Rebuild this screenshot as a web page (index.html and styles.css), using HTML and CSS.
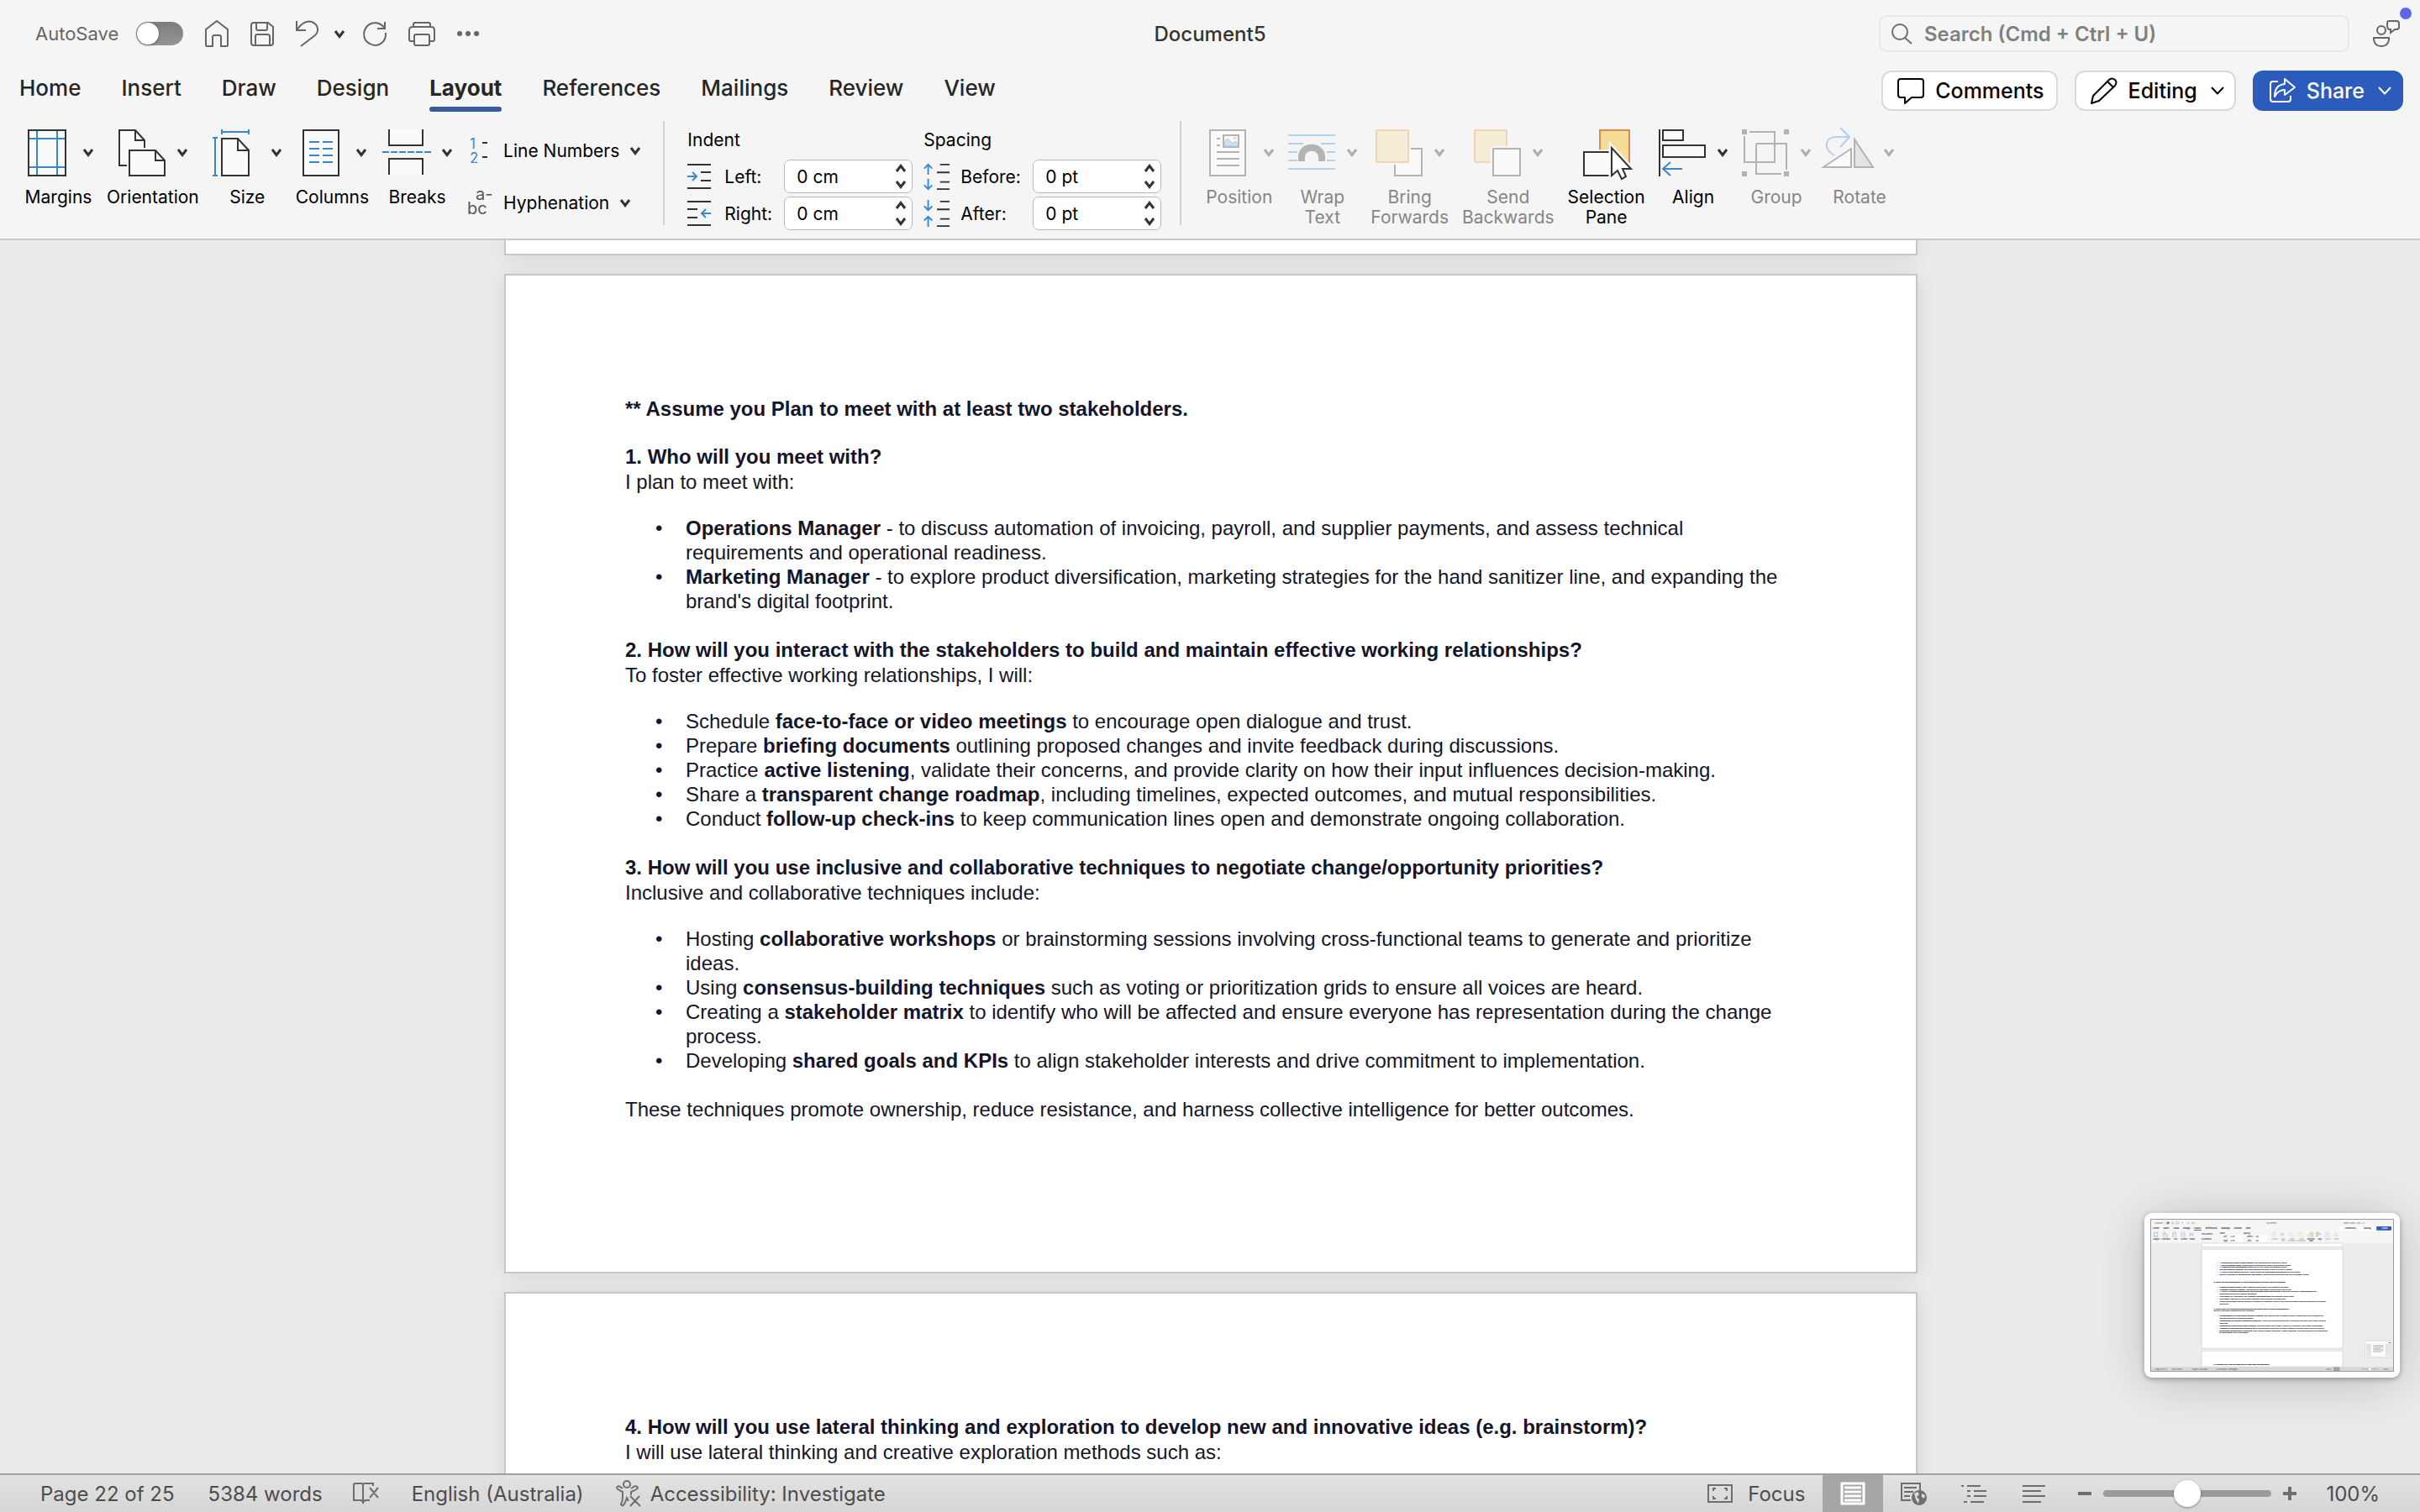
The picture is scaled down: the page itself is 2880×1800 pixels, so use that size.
FILE: index.html
```html
<!DOCTYPE html>
<html lang="en-AU">
<head>
<meta charset="utf-8">
<title>Document5</title>
<link rel="stylesheet" href="styles.css">
</head>
<body>
<svg class="sprite" aria-hidden="true">
  <symbol id="chev" viewBox="0 0 12 9"><path d="M1 1L6 7.500L11 1" fill="none" stroke="currentColor" stroke-width="3"/></symbol>
  <symbol id="chev-thin" viewBox="0 0 16 10"><path d="M1 1L8 8.500L15 1" fill="none" stroke="currentColor" stroke-width="2"/></symbol>
  <symbol id="i-margins" viewBox="0 0 56 58"><path class="paper ink" d="M5 3H49V57H5Z"/><path class="blue" d="M15 4V56M39 4V56M6 13H48M6 47H48"/></symbol>
  <symbol id="i-orient" viewBox="0 0 56 58"><path class="paper ink" d="M10 45H1V3H20L31 15V24"/><path class="ink" d="M20 3V15H31"/><path class="paper ink" d="M13 27H44L55 39V57H13Z"/><path class="ink" d="M44 27V39H55"/></symbol>
  <symbol id="i-size" viewBox="0 0 56 58"><path class="blue" d="M11 5H43M11 2V8M43 2V8M3 12V57M0 12H6M0 57H6"/><path class="paper ink" d="M11 13H30L43 27V57H11Z"/><path class="ink" d="M30 13V27H43"/></symbol>
  <symbol id="i-columns" viewBox="0 0 56 58"><path class="paper ink" d="M7 3H49V57H7Z"/><path class="blue" d="M14 17H26M30 17H42M14 25H26M30 25H42M14 33H26M30 33H42M14 41H26M30 41H42"/></symbol>
  <symbol id="i-breaks" viewBox="0 0 56 58"><path class="paper ink" d="M7 2V21H47V2M7 56V37H47V56"/><path class="blue" stroke-dasharray="8 2" d="M-1 29H57"/></symbol>
  <symbol id="i-position" viewBox="0 0 56 58"><path class="paper ink" d="M6 3H48V57H6Z"/><path class="ink" d="M14 13H18M14 21H18M14 29H41M14 37H41M14 45H41M22 9H40V23H22Z"/><path d="M23 22V17L27 13L33 19L36 16L39 19V22Z" fill="#cfe0f2" stroke="#a9c8e6"/><rect x="34" y="11" width="3" height="3" fill="#f0d3b8"/></symbol>
  <symbol id="i-wrap" viewBox="0 0 56 58"><path class="blue" d="M0 9H56M0 19H18M39 19H56M0 29H11M46 29H56M0 39H11M46 39H56M0 49H56"/><path d="M16 40V35C16 20 40 20 40 35V40" fill="none" stroke="#b3b3b3" stroke-width="8"/></symbol>
  <symbol id="i-bring" viewBox="0 0 56 58"><path class="paper ink" d="M42 25H55V57H23V44"/><path d="M1 3H39V41H1Z" fill="#f5ecd6" stroke="#f0d3b8" stroke-width="2"/></symbol>
  <symbol id="i-send" viewBox="0 0 56 58"><path d="M1 3H39V41H1Z" fill="#f5ecd6" stroke="#f0d3b8" stroke-width="2"/><path d="M20 22H56V57H20Z" fill="#f5f5f5"/><path class="paper ink" d="M23 25H55V57H23Z"/></symbol>
  <symbol id="i-select" viewBox="0 0 56 58"><path d="M20 3H55V41H20Z" fill="#f5dc98" stroke="#e08a45" stroke-width="2"/><path d="M-2 26H36V58H-2Z" fill="#f5f5f5"/><path class="paper ink" d="M1 29H33V57H1Z"/><path d="M34 24V57L41 51L46 61L51 58L47 49H57Z" fill="#fff" stroke="#f5f5f5" stroke-width="7"/><path class="ink" d="M34 24V57L41 51L46 61L51 58L47 49H57Z" fill="#fff"/></symbol>
  <symbol id="i-align" viewBox="0 0 56 58"><path class="ink" d="M1 2V58"/><path class="paper ink" d="M5 3H29V15H5ZM5 21H55V35H5Z"/><path class="blue" d="M5 49H28M14 41L5 49L14 57"/></symbol>
  <symbol id="i-group" viewBox="0 0 56 58"><path class="ink" d="M9 5H39V41H3V10M17 19H53V50M47 55H17V19"/><path fill="#b3b3b3" d="M0 2h6v6h-6zM50 2h6v6h-6zM0 52h6v6h-6zM50 52h6v6h-6z"/></symbol>
  <symbol id="i-rotate" viewBox="0 0 56 58"><path class="blue" d="M11 33C-3 25 0 11 13 11H29M18 0L29 11L18 23"/><path class="paper ink" d="M-2 47L31 25V47Z"/><path class="ink" d="M35 14L57 47H35Z" fill="#e3e3e3"/></symbol>
</svg>

<header class="chrome">
  <div class="titlebar">
    <div class="quick">
      <label class="autosave" for="autosave">AutoSave</label>
      <input class="toggle" type="checkbox" role="switch" id="autosave">
      <button class="tool home" aria-label="Home"><svg viewBox="0 0 28 32"><path d="M1 30V11L14 1L27 11V30Q27 31 26 31H19V20Q19 18 17 18H11Q9 18 9 20V31H2Q1 31 1 30Z"/></svg></button>
      <button class="tool save" aria-label="Save"><svg viewBox="0 0 28 32"><path d="M4 3H21L27 8V27Q27 30 24 30H4Q1 30 1 27V6Q1 3 4 3ZM7 3V10Q7 12 9 12H18Q20 12 20 10V3M6 30V19Q6 17 8 17H20Q23 17 23 19V30"/></svg></button>
      <button class="tool undo" aria-label="Undo"><svg viewBox="0 0 28 32"><path d="M1 1V12H12M1 12C7 3 13 0 19 2C27 5 28 13 23 18L6 31"/></svg></button>
      <button class="tool undo-more" aria-label="Undo options"><svg class="chev"><use href="#chev"/></svg></button>
      <button class="tool redo" aria-label="Repeat"><svg viewBox="0 0 28 32"><path d="M26 2V10H17M26 10C21 2 11 1 5 7C-1 14 0 24 8 28C17 33 28 27 27 15"/></svg></button>
      <button class="tool print" aria-label="Print"><svg viewBox="0 0 32 32"><path d="M6 8V5Q6 3 8 3H24Q26 3 26 5V8M6 25H3Q1 25 1 23V12Q1 8 5 8H27Q31 8 31 12V23Q31 25 29 25H26M9 17H23Q25 17 25 19V28Q25 30 23 30H9Q7 30 7 28V19Q7 17 9 17Z"/></svg></button>
      <button class="tool more" aria-label="More"><svg viewBox="0 0 28 32"><path class="dots" d="M3 16h.1M13 16h.1M23 16h.1"/></svg></button>
    </div>
    <h1 class="doc-name">Document5</h1>
    <div class="title-right">
      <label class="search"><svg viewBox="0 0 26 26"><circle cx="11" cy="11" r="9"/><path d="M17 18L25 25"/></svg><input type="search" aria-label="Search" placeholder="Search (Cmd + Ctrl + U)"></label>
      <button class="presence" aria-label="Coauthoring"><svg viewBox="0 0 32 32"><ellipse cx="10" cy="12" rx="5" ry="5"/><path d="M1 21H19V23Q18 31 10 31Q2 31 1 23ZM19 1H28Q31 1 31 4V8Q31 11 28 11H26L21 15V11H19Q17 10 17 7V4Q17 1 19 1Z"/></svg><span class="badge"></span></button>
    </div>
  </div>

  <div class="tabrow">
    <nav class="tabs" aria-label="Ribbon">
      <a href="#home">Home</a><a href="#insert">Insert</a><a href="#draw">Draw</a><a href="#design">Design</a><a href="#layout" class="active" aria-current="page">Layout</a><a href="#references">References</a><a href="#mailings">Mailings</a><a href="#review">Review</a><a href="#view">View</a>
    </nav>
    <div class="actions">
      <button class="action"><svg viewBox="0 0 34 32"><path d="M5 2H29Q32 2 32 5V21Q32 24 29 24H18L10 31V24H5Q2 24 2 21V5Q2 2 5 2Z"/></svg>Comments</button>
      <button class="action"><svg viewBox="0 0 34 32"><path d="M2 31L4 22L23 3Q26 0 30 3Q33 6 30 10L11 28ZM21 5L28 12"/></svg>Editing<svg class="chev-thin"><use href="#chev-thin"/></svg></button>
      <button class="action share"><svg viewBox="0 0 34 32"><path d="M12 5H6Q3 5 3 8V26Q3 29 6 29H24Q27 29 27 26V22M20 8V2L32 12L20 21V15Q12 15 8 23Q8 9 20 8Z"/></svg>Share<svg class="chev-thin"><use href="#chev-thin"/></svg></button>
    </div>
  </div>

  <div class="ribbon">
    <div class="group">
      <button class="big"><span class="face"><svg class="pic"><use href="#i-margins"/></svg><svg class="chev"><use href="#chev"/></svg></span>Margins</button>
      <button class="big"><span class="face"><svg class="pic"><use href="#i-orient"/></svg><svg class="chev"><use href="#chev"/></svg></span>Orientation</button>
      <button class="big"><span class="face"><svg class="pic"><use href="#i-size"/></svg><svg class="chev"><use href="#chev"/></svg></span>Size</button>
      <button class="big"><span class="face"><svg class="pic"><use href="#i-columns"/></svg><svg class="chev"><use href="#chev"/></svg></span>Columns</button>
      <button class="big"><span class="face"><svg class="pic"><use href="#i-breaks"/></svg><svg class="chev"><use href="#chev"/></svg></span>Breaks</button>
    </div>
    <div class="stack">
      <button class="small"><svg class="mini" viewBox="0 0 30 32"><text class="num" x="3" y="14">1</text><text class="num" x="3" y="31">2</text><path class="ink" d="M18 7H24M18 24H24"/></svg>Line Numbers<svg class="chev"><use href="#chev"/></svg></button>
      <button class="small"><svg class="mini" viewBox="0 0 30 32"><text class="abc" x="10" y="13">a-</text><text class="abc" x="0" y="30">bc</text></svg>Hyphenation<svg class="chev"><use href="#chev"/></svg></button>
    </div>
    <div class="rule"></div>
    <div class="fields">
      <fieldset class="fieldset">
        <legend>Indent</legend>
        <div class="row"><svg class="para" viewBox="0 0 32 32"><path class="ink" d="M0 2H28M16 11H28M16 21H28M0 30H28"/><path class="blue" d="M0 16H11M6 11L11 16L6 21"/></svg><label for="il">Left:</label><span class="spin"><input id="il" value="0 cm"><span class="steps"><button aria-label="Increase"><svg class="chev up"><use href="#chev"/></svg></button><button aria-label="Decrease"><svg class="chev"><use href="#chev"/></svg></button></span></span></div>
        <div class="row"><svg class="para" viewBox="0 0 32 32"><path class="ink" d="M0 2H28M0 11H12M0 21H12M0 30H28"/><path class="blue" d="M28 16H17M22 11L17 16L22 21"/></svg><label for="ir">Right:</label><span class="spin"><input id="ir" value="0 cm"><span class="steps"><button aria-label="Increase"><svg class="chev up"><use href="#chev"/></svg></button><button aria-label="Decrease"><svg class="chev"><use href="#chev"/></svg></button></span></span></div>
      </fieldset>
      <fieldset class="fieldset wide">
        <legend>Spacing</legend>
        <div class="row"><svg class="para" viewBox="0 0 32 36"><path class="ink" d="M20 3H32M16 13H32M20 25H32M16 34H32"/><path class="blue" d="M5 3V16M0 8L5 3L10 8M5 21V34M0 29L5 34L10 29"/></svg><label for="sb">Before:</label><span class="spin"><input id="sb" value="0 pt"><span class="steps"><button aria-label="Increase"><svg class="chev up"><use href="#chev"/></svg></button><button aria-label="Decrease"><svg class="chev"><use href="#chev"/></svg></button></span></span></div>
        <div class="row"><svg class="para" viewBox="0 0 32 36"><path class="ink" d="M20 3H32M16 13H32M20 25H32M16 34H32"/><path class="blue" d="M5 1V14M0 9L5 14L10 9M5 35V22M0 27L5 22L10 27"/></svg><label for="sa">After:</label><span class="spin"><input id="sa" value="0 pt"><span class="steps"><button aria-label="Increase"><svg class="chev up"><use href="#chev"/></svg></button><button aria-label="Decrease"><svg class="chev"><use href="#chev"/></svg></button></span></span></div>
      </fieldset>
    </div>
    <div class="rule"></div>
    <div class="group">
      <button class="big" disabled><span class="face"><svg class="pic"><use href="#i-position"/></svg><svg class="chev"><use href="#chev"/></svg></span>Position</button>
      <button class="big" disabled><span class="face"><svg class="pic"><use href="#i-wrap"/></svg><svg class="chev"><use href="#chev"/></svg></span>Wrap<br>Text</button>
      <button class="big" disabled><span class="face"><svg class="pic"><use href="#i-bring"/></svg><svg class="chev"><use href="#chev"/></svg></span>Bring<br>Forwards</button>
      <button class="big" disabled><span class="face"><svg class="pic"><use href="#i-send"/></svg><svg class="chev"><use href="#chev"/></svg></span>Send<br>Backwards</button>
      <button class="big"><span class="face"><svg class="pic"><use href="#i-select"/></svg></span>Selection<br>Pane</button>
      <button class="big"><span class="face"><svg class="pic"><use href="#i-align"/></svg><svg class="chev"><use href="#chev"/></svg></span>Align</button>
      <button class="big" disabled><span class="face"><svg class="pic"><use href="#i-group"/></svg><svg class="chev"><use href="#chev"/></svg></span>Group</button>
      <button class="big" disabled><span class="face"><svg class="pic"><use href="#i-rotate"/></svg><svg class="chev"><use href="#chev"/></svg></span>Rotate</button>
    </div>
  </div>
</header>

<main class="canvas">
  <div class="page tail"></div>
  <article class="page full">
    <p class="lead"><strong>** Assume you Plan to meet with at least two stakeholders.</strong></p>
    <section>
      <h2>1. Who will you meet with?</h2>
      <p>I plan to meet with:</p>
      <ul>
        <li><strong>Operations Manager</strong> - to discuss automation of invoicing, payroll, and supplier payments, and assess technical requirements and operational readiness.</li>
        <li><strong>Marketing Manager</strong> - to explore product diversification, marketing strategies for the hand sanitizer line, and expanding the brand's digital footprint.</li>
      </ul>
    </section>
    <section>
      <h2>2. How will you interact with the stakeholders to build and maintain effective working relationships?</h2>
      <p>To foster effective working relationships, I will:</p>
      <ul>
        <li>Schedule <strong>face-to-face or video meetings</strong> to encourage open dialogue and trust.</li>
        <li>Prepare <strong>briefing documents</strong> outlining proposed changes and invite feedback during discussions.</li>
        <li>Practice <strong>active listening</strong>, validate their concerns, and provide clarity on how their input influences decision-making.</li>
        <li>Share a <strong>transparent change roadmap</strong>, including timelines, expected outcomes, and mutual responsibilities.</li>
        <li>Conduct <strong>follow-up check-ins</strong> to keep communication lines open and demonstrate ongoing collaboration.</li>
      </ul>
    </section>
    <section>
      <h2>3. How will you use inclusive and collaborative techniques to negotiate change/opportunity priorities?</h2>
      <p>Inclusive and collaborative techniques include:</p>
      <ul>
        <li>Hosting <strong>collaborative workshops</strong> or brainstorming sessions involving cross-functional teams to generate and prioritize ideas.</li>
        <li>Using <strong>consensus-building techniques</strong> such as voting or prioritization grids to ensure all voices are heard.</li>
        <li>Creating a <strong>stakeholder matrix</strong> to identify who will be affected and ensure everyone has representation during the change process.</li>
        <li>Developing <strong>shared goals and KPIs</strong> to align stakeholder interests and drive commitment to implementation.</li>
      </ul>
    </section>
    <p>These techniques promote ownership, reduce resistance, and harness collective intelligence for better outcomes.</p>
  </article>
  <article class="page full">
    <section>
      <h2>4. How will you use lateral thinking and exploration to develop new and innovative ideas (e.g. brainstorm)?</h2>
      <p>I will use lateral thinking and creative exploration methods such as:</p>
    </section>
  </article>
</main>

<footer class="status">
  <button>Page 22 of 25</button>
  <button class="words">5384 words</button>
  <button class="proof" aria-label="Proofing"><svg viewBox="0 0 32 28"><path d="M12 25V4Q12 2 10 2H3Q1 2 1 4V22H9Q12 22 12 26Q12 22 16 22H20M12 4Q12 2 14 2H24V5M20 7L30 19M30 7L20 19"/></svg></button>
  <button>English (Australia)</button>
  <button class="access"><svg viewBox="0 0 30 32"><circle cx="13" cy="5" r="4"/><path d="M8 10Q2 5 1 9Q1 11 8 14V20Q8 25 6 29Q9 33 12 24L13 21L15 25M18 10Q24 5 26 9Q26 11 18 14V18M17 19L29 31M28 19L17 31"/></svg>Accessibility: Investigate</button>
  <div class="views">
    <button class="focus"><svg viewBox="0 0 30 24"><path d="M1 2H29V22H1ZM7 9V6H10M20 6H23V9M7 15V18H10M20 18H23V15"/></svg>Focus</button>
    <button class="view on" aria-label="Print layout"><svg viewBox="0 0 32 28"><path d="M3 2H29V26H3Z"/><path d="M6 7H26M6 12H26M6 17H26M6 22H26"/></svg></button>
    <button class="view" aria-label="Web layout"><svg viewBox="0 0 32 28"><path d="M13 22H2V2H24V10M5 7H20M5 12H16M5 17H12"/><circle cx="23" cy="19" r="9" fill="#6e6e6e" stroke="none"/><path d="M17 14L21 12L23 15L20 18L23 21L22 26L19 21ZM26 14L30 16L29 20L26 18Z" fill="#dcdcdc" stroke="none"/></svg></button>
    <button class="view" aria-label="Outline"><svg viewBox="0 0 32 28"><path d="M1 5H4M8 5H24M8 11H12M16 11H31M8 17H12M16 17H31M4 24H8M12 24H28"/></svg></button>
    <button class="view" aria-label="Draft"><svg viewBox="0 0 32 28"><path d="M2 5H29M2 11H24M2 17H29M2 24H24"/></svg></button>
    <button class="zoom" aria-label="Zoom out"><svg viewBox="0 0 16 16"><path d="M0 8H16"/></svg></button>
    <input class="slider" type="range" min="0" max="100" value="50" aria-label="Zoom">
    <button class="zoom" aria-label="Zoom in"><svg viewBox="0 0 16 16"><path d="M0 8H16M8 0V16"/></svg></button>
    <button class="percent">100%</button>
  </div>
</footer>

<aside class="shot" aria-label="Screenshot preview">
  <svg viewBox="0 0 2880 1800">
    <path fill="#ececec" d="M0 0H2880V1800H0Z"/>
    <path fill="#f5f5f5" d="M0 0H2880V280H0Z"/>
    <path fill="#fff" stroke="#c8c8c8" stroke-width="6" d="M600 280H2282V324H600ZM600 352H2282V1532H600ZM600 1562H2282V1752H600Z"/>
    <g class="s-title"><text x="42" y="46">AutoSave</text><text x="1374" y="46">Document5</text><text x="2290" y="46">Search (Cmd + Ctrl + U)</text></g>
    <rect x="162" y="24" width="56" height="28" rx="14" fill="#777"/><circle cx="176" cy="38" r="13" fill="#fff"/>
    <g class="s-line"><path d="M246 50V34L258 24L270 34V50ZM298 24H326V50H298ZM356 26L360 36L374 28Q386 36 366 52M458 28Q432 28 436 46Q450 60 458 42M486 30H514V48H486Z"/></g>
    <g class="s-tab"><text x="23" y="112">Home</text><text x="145" y="112">Insert</text><text x="267" y="112">Draw</text><text x="379" y="112">Design</text><text x="511" y="112">Layout</text><text x="647" y="112">References</text><text x="836" y="112">Mailings</text><text x="988" y="112">Review</text><text x="1124" y="112">View</text></g>
    <path d="M510 120H598V128H510Z" fill="#3a5a9f"/>
    <rect x="2240" y="80" width="210" height="48" rx="10" fill="#fff"/><rect x="2470" y="80" width="192" height="48" rx="10" fill="#fff"/><rect x="2682" y="80" width="178" height="48" rx="8" fill="#2b5cbb"/>
    <g class="s-tab"><text x="2304" y="112">Comments</text><text x="2533" y="112">Editing</text><text class="s-share" x="2745" y="112">Share</text></g>
    <use href="#i-margins" x="28" y="146" width="56" height="58"/><use href="#i-orient" x="140" y="146" width="56" height="58"/><use href="#i-size" x="253" y="146" width="56" height="58"/><use href="#i-columns" x="353" y="146" width="56" height="58"/><use href="#i-breaks" x="453" y="146" width="56" height="58"/>
    <use href="#i-select" x="1875" y="146" width="56" height="58"/><use href="#i-align" x="1967" y="146" width="56" height="58"/>
    <g class="pale"><use href="#i-position" x="1433" y="146" width="56" height="58"/><use href="#i-wrap" x="1533" y="146" width="56" height="58"/><use href="#i-bring" x="1635" y="146" width="56" height="58"/><use href="#i-send" x="1749" y="146" width="56" height="58"/><use href="#i-group" x="2067" y="146" width="56" height="58"/><use href="#i-rotate" x="2167" y="146" width="56" height="58"/></g>
    <path fill="#fff" d="M933 184H1086V224H933ZM933 230H1086V270H933ZM1229 184H1382V224H1229ZM1229 230H1382V270H1229Z"/>
    <g class="s-lab"><text x="26" y="236">Margins</text><text x="124" y="236">Orientation</text><text x="271" y="236">Size</text><text x="350" y="236">Columns</text><text x="458" y="236">Breaks</text><text x="598" y="180">Line Numbers</text><text x="598" y="244">Hyphenation</text><text x="818" y="168">Indent</text><text x="862" y="212">Left:</text><text x="862" y="256">Right:</text><text x="948" y="212">0 cm</text><text x="948" y="256">0 cm</text><text x="1100" y="168">Spacing</text><text x="1144" y="212">Before:</text><text x="1144" y="256">After:</text><text x="1244" y="212">0 pt</text><text x="1244" y="256">0 pt</text><text x="1858" y="236">Selection</text><text x="1880" y="260">Pane</text><text x="1982" y="236">Align</text></g>
    <g class="s-lab s-dim"><text x="1432" y="236">Position</text><text x="1546" y="236">Wrap</text><text x="1551" y="260">Text</text><text x="1649" y="236">Bring</text><text x="1630" y="260">Forwards</text><text x="1765" y="236">Send</text><text x="1736" y="260">Backwards</text><text x="2075" y="236">Group</text><text x="2174" y="236">Rotate</text></g>
    <g class="s-doc">
      <text x="784" y="516">•</text><text x="816" y="516">A <tspan>strong eco-friendly brand identity</tspan> that resonates with consumer values.</text>
      <text x="784" y="545">•</text><text x="816" y="545">A <tspan>loyal customer base</tspan>, predominantly professional women who trust the brand.</text>
      <text x="784" y="574">•</text><text x="816" y="574">An <tspan>experienced management team</tspan> with a clear vision and strategic focus.</text>
      <text x="784" y="603">•</text><text x="816" y="603"><tspan>Willing financial backing</tspan>, with shareholders and banks ready to invest in growth.</text>
      <text x="784" y="632">•</text><text x="816" y="632">A flexible organisational structure, which allows for <tspan>rapid decision-making</tspan> and innovation.</text>
      <text x="784" y="661">•</text><text x="816" y="661">Strong emphasis on <tspan>sustainability and quality</tspan>, aligning with market demand and regulatory trends.</text>
      <text x="744" y="748"><tspan>5. What are the weaknesses in your organisation that may require change?</tspan></text>
      <text x="784" y="806">•</text><text x="816" y="806"><tspan>Limited product range</tspan>, which restricts market share and customer retention.</text>
      <text x="784" y="835">•</text><text x="816" y="835"><tspan>Outdated internal systems</tspan>, contributing to operational inefficiencies and errors.</text>
      <text x="784" y="864">•</text><text x="816" y="864">A culture of <tspan>limited transparency and top-down decision-making</tspan>, leading to employee dissatisfaction and</text>
      <text x="816" y="893">disengagement during change processes.</text>
      <text x="784" y="922">•</text><text x="816" y="922">Inconsistent or inadequate use of <tspan>digital marketing tools</tspan> to maximise online sales.</text>
      <text x="784" y="951">•</text><text x="816" y="951"><tspan>Skill gaps</tspan>, especially in technology adoption and innovation management.</text>
      <text x="784" y="980">•</text><text x="816" y="980">These weaknesses require strategic investment in systems, training, and communication improvements to drive change</text>
      <text x="816" y="1009">effectively.</text>
      <text x="744" y="1065"><tspan>6. What new and innovative opportunities currently exist in your organisation?</tspan></text>
      <text x="744" y="1094">Several innovation opportunities are available:</text>
      <text x="784" y="1151">•</text><text x="816" y="1151"><tspan>Development of a new hand sanitizer product line</tspan>, aligning with increased hygiene awareness and leveraging the</text>
      <text x="816" y="1180">$50,000 product development budget.</text>
      <text x="784" y="1209">•</text><text x="816" y="1209"><tspan>Automation of internal processes using RPA</tspan>, such as invoicing and payroll, to improve accuracy and reduce manual</text>
      <text x="816" y="1238">workload.</text>
      <text x="784" y="1267">•</text><text x="816" y="1267"><tspan>Expansion of the online retail channel</tspan>, including better use of SEO, influencer marketing, and mobile optimization.</text>
      <text x="784" y="1296">•</text><text x="816" y="1296"><tspan>Creation of personalized skincare kits</tspan> or subscription models to increase customer retention and recurring revenue.</text>
      <text x="784" y="1325">•</text><text x="816" y="1325"><tspan>Enhanced sustainability initiatives</tspan>, such as zero-waste packaging, carbon offsetting, and ethical sourcing certifications,</text>
      <text x="816" y="1354">to differentiate from competitors.</text>
      <text x="744" y="1728"><tspan>** Assume you Plan to meet with at least two stakeholders.</tspan></text>
    </g>
    <rect x="2546" y="1440" width="316" height="200" rx="10" fill="#fafafa" stroke="#d0d0d0" stroke-width="8"/>
    <path fill="#e4e4e4" d="M2560 1480H2848V1626H2560Z"/><path fill="#fff" d="M2620 1480H2788V1626H2620Z"/><path fill="#2b5cbb" d="M2828 1460H2848V1470H2828Z"/>
    <path stroke="#8a8a94" stroke-width="5" d="M2642 1496H2770M2642 1508H2760M2642 1520H2770M2642 1534H2740M2642 1548H2770M2642 1560H2764M2642 1574H2740"/>
    <path fill="#d8d8d8" d="M0 1752H2880V1800H0Z"/>
    <path fill="#a0a0a0" d="M2170 1754H2244V1800H2170ZM2504 1774H2704V1782H2504Z"/><circle cx="2604" cy="1778" r="16" fill="#fff"/>
    <g class="s-title"><text x="48" y="1788">Page 20 of 25</text><text x="247" y="1788">5384 words</text><text x="489" y="1788">English (Australia)</text><text x="773" y="1788">Accessibility: Investigate</text><text x="2082" y="1788">Focus</text><text x="2769" y="1788">100%</text></g>
  </svg>
</aside>
</body>
</html>
```
FILE: styles.css
```css
* { box-sizing: border-box; }

:root {
  --ui: Inter, "Liberation Sans", sans-serif;
  --ink: #333;
  --blue: #3b87cc;
}

body {
  margin: 0;
  height: 100vh;
  display: flex;
  flex-direction: column;
  overflow: hidden;
  background: #ebebeb;
  font-family: var(--ui);
  font-size: 21px;
  color: #000;
}

button {
  font: inherit;
  color: inherit;
  background: none;
  border: 0;
  padding: 0;
  display: flex;
  align-items: center;
}

svg { display: block; flex: none; fill: none; overflow: visible; }
symbol { overflow: visible; }
.sprite { position: absolute; width: 0; height: 0; }

.ink { stroke: var(--ink); stroke-width: 2; }
.blue { stroke: var(--blue); stroke-width: 2; fill: none; }
.paper { fill: #fafafa; }
.chev { width: 12px; height: 9px; color: #333; }
.chev.up { transform: rotate(180deg); }
.chev-thin { width: 16px; height: 10px; }

/* Title bar */
.chrome { background: #f5f5f5; border-bottom: 2px solid #c9c9c9; }
.titlebar {
  height: 80px;
  display: grid;
  grid-template-columns: 1fr auto 1fr;
  align-items: center;
  padding: 0 24px;
}
.quick { display: flex; align-items: center; gap: 26px; padding-left: 18px; }
.autosave { font-size: 22px; color: #666; width: 94px; white-space: nowrap; }
.toggle {
  appearance: none;
  margin: 0;
  width: 56px;
  height: 28px;
  border-radius: 14px;
  background: linear-gradient(#7c7c7c, #959595);
}
.toggle::before {
  content: "";
  display: block;
  width: 26px;
  height: 26px;
  margin: 1px;
  border-radius: 50%;
  background: #fff;
  box-shadow: 0 1px 3px rgba(0, 0, 0, .4);
}
.tool svg { width: 28px; height: 32px; stroke: #666; stroke-width: 2; }
.tool.print svg { width: 32px; }
.tool .chev { width: 12px; height: 9px; }
.tool.undo-more { margin-left: -8px; margin-right: -4px; }
.tool .dots { stroke-width: 6; stroke-linecap: round; }
.doc-name { margin: 0; font-size: 24px; font-weight: 500; color: #333; }
.title-right { display: flex; justify-content: flex-end; align-items: center; gap: 28px; }
.search {
  width: 560px;
  height: 44px;
  display: flex;
  align-items: center;
  gap: 14px;
  padding: 0 12px;
  border: 2px solid #e7e7e7;
  border-radius: 10px;
}
.search svg { width: 26px; height: 26px; stroke: #6e6e6e; stroke-width: 2; }
.search input {
  flex: 1;
  border: 0;
  padding: 0;
  background: none;
  font: 600 24px var(--ui);
}
.search input::placeholder { color: #808080; }
.presence { position: relative; }
.presence svg { width: 32px; height: 32px; stroke: #666; stroke-width: 2; }
.badge {
  position: absolute;
  top: -15px;
  right: -14px;
  width: 14px;
  height: 14px;
  border-radius: 50%;
  background: #6264e8;
}

/* Tabs */
.tabrow {
  height: 56px;
  display: flex;
  justify-content: space-between;
  padding: 3px 20px 0 23px;
}
.tabs { display: flex; gap: 48px; font-size: 26px; font-weight: 500; }
.tabs a { color: #262626; text-decoration: none; line-height: 44px; }
.tabs .active { font-weight: 700; }
.tabs .active::after {
  content: "";
  display: block;
  height: 6px;
  border-radius: 3px;
  background: #3a5a9f;
}
.actions { display: flex; gap: 20px; padding-top: 1px; font-size: 25px; font-weight: 500; }
.action {
  height: 48px;
  gap: 12px;
  padding: 0 14px 0 16px;
  border: 2px solid #d9d9d9;
  border-radius: 12px;
  background: #fff;
}
.action svg { width: 34px; height: 32px; stroke: currentColor; stroke-width: 2; stroke-linejoin: round; }
.action .chev-thin { width: 16px; height: 10px; margin-left: 4px; }
.action + .action { padding-right: 12px; }
.share { background: #2b5cbb; border-color: #2b5cbb; color: #fff; }

/* Ribbon */
.ribbon {
  display: flex;
  align-items: flex-start;
  height: 148px;
  padding: 8px 28px 0;
}
.group { display: flex; gap: 16px; padding-top: 8px; }
.big {
  flex-direction: column;
  min-width: 83px;
  line-height: 24px;
}
.face { display: flex; align-items: center; gap: 14px; margin-bottom: 13px; }
.pic { width: 56px; height: 58px; }
.big:disabled { color: #868686; --ink: #b3b3b3; --blue: #b4cfe8; }
.big:disabled .chev { color: #adadad; }
.pale { --ink: #b3b3b3; --blue: #b4cfe8; }
.stack { display: flex; flex-direction: column; gap: 8px; margin-left: 18px; padding: 8px 5px 0 0; }
.small { height: 54px; gap: 13px; }
.mini { width: 30px; height: 32px; }
.num { font: 17px var(--ui); fill: var(--blue); }
.abc { font: 20px var(--ui); fill: #555; }
.rule { width: 2px; height: 124px; margin: 0 27px 0 22px; background: #d2d2d2; }
.fields { display: flex; gap: 13px; padding-top: 8px; }
.fieldset { border: 0; margin: 0; padding: 0; min-width: 0; display: grid; row-gap: 4px; }
legend { padding: 0; line-height: 30px; margin-bottom: 8px; }
.row { display: grid; grid-template-columns: 44px 71px 153px; align-items: center; }
.wide .row { grid-template-columns: 44px 86px 153px; }
.para { width: 32px; height: 34px; }
.spin {
  height: 40px;
  display: flex;
  align-items: center;
  padding: 0 7px 0 14px;
  border: 1px solid #b9b9b9;
  border-radius: 7px;
  background: #fff;
}
.spin input { flex: 1; min-width: 0; border: 0; padding: 0; font: 21px var(--ui); background: none; }
.steps { display: grid; gap: 10px; }

/* Document */
.canvas {
  flex: 1;
  min-height: 0;
  overflow: hidden;
  display: flex;
  flex-direction: column;
  align-items: center;
  gap: 22px;
  padding-left: 2px;
}
.page {
  flex: none;
  width: 1682px;
  border: 2px solid #c6c6c6;
  background: #fff;
  box-shadow: 0 2px 22px rgba(0, 0, 0, .1);
  font: 24px/29px "Liberation Sans", Arial, sans-serif;
  color: #15152a;
}
.tail { height: 18px; border-top: 0; }
.full { min-height: 1190px; padding: 144px 134px 0 142px; }
.page p, .page h2 { margin: 0; font-size: inherit; }
.page h2 { line-height: 30px; }
.page .lead { margin-bottom: 28px; }
.page ul { list-style: none; margin: 26px 0 29px; padding: 0 0 0 72px; }
.page li::before { content: "•"; float: left; margin-left: -36px; }

/* Status bar */
.status {
  height: 46px;
  flex: none;
  display: flex;
  align-items: center;
  padding-left: 48px;
  border-top: 2px solid #a0a0a0;
  background: linear-gradient(#e2e2e2, #d6d6d6);
  color: #4d4d4d;
  font-size: 24px;
}
.status svg { stroke: #6e6e6e; stroke-width: 2; }
.words { margin-left: 40px; }
.proof { margin: 0 38px 0 36px; }
.proof svg { width: 32px; height: 28px; }
.access { margin-left: 38px; gap: 11px; }
.access svg { width: 30px; height: 32px; }
.views { margin-left: auto; display: flex; align-items: center; height: 100%; padding-right: 48px; }
.focus { gap: 18px; margin-right: 21px; }
.focus svg { width: 30px; height: 24px; }
.view { width: 72px; height: 100%; justify-content: center; }
.view svg { width: 32px; height: 28px; }
.view.on { background: #a6a6a6; }
.view.on svg { stroke: #fff; stroke-width: 3; }
.zoom svg { width: 16px; height: 16px; stroke-width: 4; }
.view + .zoom { margin-left: 16px; }
.slider {
  appearance: none;
  width: 200px;
  height: 8px;
  margin: 0 14px;
  border-radius: 4px;
  background: #9b9b9b;
}
.slider::-webkit-slider-thumb {
  appearance: none;
  width: 32px;
  height: 32px;
  border-radius: 50%;
  background: #fff;
  box-shadow: 0 1px 3px rgba(0, 0, 0, .4);
}
.percent { margin-left: 35px; }

/* Floating screenshot preview */
.shot {
  position: absolute;
  right: 24px;
  bottom: 160px;
  width: 304px;
  height: 196px;
  padding: 8px;
  border-radius: 9px;
  background: #fff;
  box-shadow: 0 2px 6px rgba(0, 0, 0, .3), 0 6px 60px rgba(0, 0, 0, .2);
}
.shot svg { width: 288px; height: 180px; overflow: hidden; outline: 1px solid #999; }
.s-title { font: 22px var(--ui); fill: #555; }
.s-line { stroke: #666; stroke-width: 3; }
.s-tab { font: 600 25px var(--ui); fill: #222; }
.s-share { fill: #fff; }
.s-lab { font: 20px var(--ui); fill: #000; }
.s-dim { fill: #999; }
.s-doc { font: 24px "Liberation Sans", Arial, sans-serif; fill: #15152a; stroke: #15152a; stroke-width: 1; }
.s-doc tspan { font-weight: 700; }
```
